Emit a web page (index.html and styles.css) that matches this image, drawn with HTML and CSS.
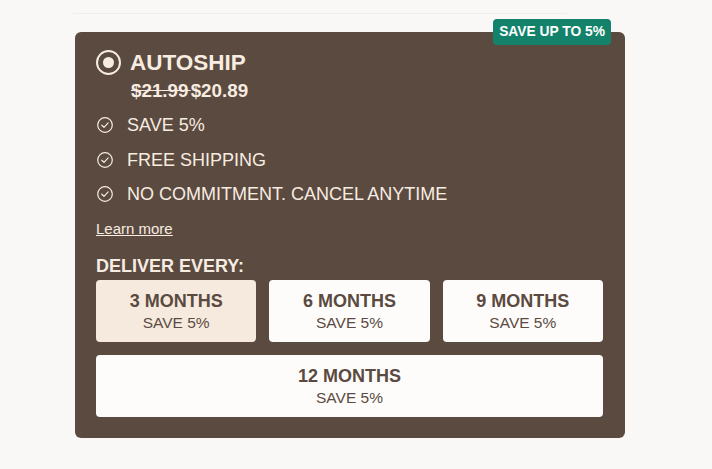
FILE: index.html
```html
<!DOCTYPE html>
<html lang="en">
<head>
  <meta charset="UTF-8" />
  <meta name="viewport" content="width=device-width, initial-scale=1.0" />
  <title>Autoship</title>
  <link rel="stylesheet" href="styles.css">
</head>
<body>

<div class="wrap">
  <div class="divider"></div>

  <div class="card">
    <span class="badge">SAVE UP TO 5%</span>

    <div class="title-row">
      <span class="radio"><span class="dot"></span></span>
      <span class="title">AUTOSHIP</span>
    </div>
    <div class="price"><s>$21.99 </s><b>$20.89</b></div>

    <ul class="perks">
      <li>
        <svg width="18" height="18" viewBox="0 0 18 18"><circle cx="9" cy="9" r="7.3" /><path d="M5.8 9.2l2.2 2.1 4.2-4.4" /></svg>
        SAVE 5%
      </li>
      <li>
        <svg width="18" height="18" viewBox="0 0 18 18"><circle cx="9" cy="9" r="7.3" /><path d="M5.8 9.2l2.2 2.1 4.2-4.4" /></svg>
        FREE SHIPPING
      </li>
      <li>
        <svg width="18" height="18" viewBox="0 0 18 18"><circle cx="9" cy="9" r="7.3" /><path d="M5.8 9.2l2.2 2.1 4.2-4.4" /></svg>
        NO COMMITMENT. CANCEL ANYTIME
      </li>
    </ul>

    <a class="learn" href="#">Learn more</a>

    <div class="deliver">DELIVER EVERY:</div>

    <div class="options">
      <button class="option selected"><strong>3 MONTHS</strong><span>SAVE 5%</span></button>
      <button class="option"><strong>6 MONTHS</strong><span>SAVE 5%</span></button>
      <button class="option"><strong>9 MONTHS</strong><span>SAVE 5%</span></button>
      <button class="option wide"><strong>12 MONTHS</strong><span>SAVE 5%</span></button>
    </div>
  </div>
</div>

</body>
</html>
```

FILE: styles.css
```css
html, body {
  margin: 0;
  padding: 0;
  background-color: #f9f8f6;
  font-family: 'Liberation Sans', Arial, sans-serif;
  color: #f7ece1;
}

.wrap {
  width: 550px;
  padding: 13px 0 0 75px;
}

.divider {
  height: 1px;
  width: 494px;
  margin-left: -2px;
  background-color: #f1ede7;
}

.card {
  position: relative;
  margin-top: 18px;
  background-color: #5b4a3f;
  border-radius: 6px;
  padding: 18px 22px 21px 21px;
}

.badge {
  position: absolute;
  top: -13px;
  right: 14px;
  height: 26px;
  line-height: 26px;
  padding: 0 6px;
  background-color: #12826a;
  color: #ffffff;
  border-radius: 4px;
  font-size: 13.8px;
  font-weight: bold;
}

.title-row {
  display: flex;
  align-items: center;
  gap: 9px;
}

.radio {
  width: 21px;
  height: 21px;
  border: 2px solid #f7ece1;
  border-radius: 50%;
  display: flex;
  align-items: center;
  justify-content: center;
}

.dot {
  width: 11px;
  height: 11px;
  border-radius: 50%;
  background-color: #f7ece1;
}

.title {
  font-size: 22.5px;
  font-weight: bold;
  line-height: 24px;
}

.price {
  margin: 5px 0 0 35px;
  font-size: 18.8px;
  font-weight: bold;
  line-height: 22px;
}

.price s {
  word-spacing: -3px;
}

.perks {
  list-style: none;
  margin: 11px 0 0;
  padding: 0;
  display: flex;
  flex-direction: column;
  gap: 10.5px;
}

.perks li {
  display: flex;
  align-items: center;
  gap: 13px;
  font-size: 18px;
  line-height: 24px;
}

.perks svg {
  fill: none;
  stroke: #f7ece1;
  stroke-width: 1.2;
  stroke-linecap: round;
  stroke-linejoin: round;
}

.learn {
  display: inline-block;
  margin-top: 13px;
  color: #f7ece1;
  font-size: 15px;
  line-height: 20px;
}

.deliver {
  margin-top: 16px;
  font-size: 18px;
  font-weight: bold;
  line-height: 22px;
}

.options {
  margin-top: 3px;
  display: grid;
  grid-template-columns: repeat(3, 1fr);
  grid-auto-rows: 62px;
  gap: 13px;
}

.option {
  display: flex;
  flex-direction: column;
  align-items: center;
  justify-content: center;
  border: none;
  border-radius: 4px;
  background-color: #fefcfb;
  color: #5b4a3f;
  font-family: inherit;
  padding: 2px 0 0;
  cursor: pointer;
}

.option.selected {
  background-color: #f6eadf;
}

.option.wide {
  grid-column: 1 / 4;
}

.option strong {
  font-size: 18px;
  line-height: 22px;
}

.option span {
  font-size: 15.5px;
  line-height: 22px;
}
```
